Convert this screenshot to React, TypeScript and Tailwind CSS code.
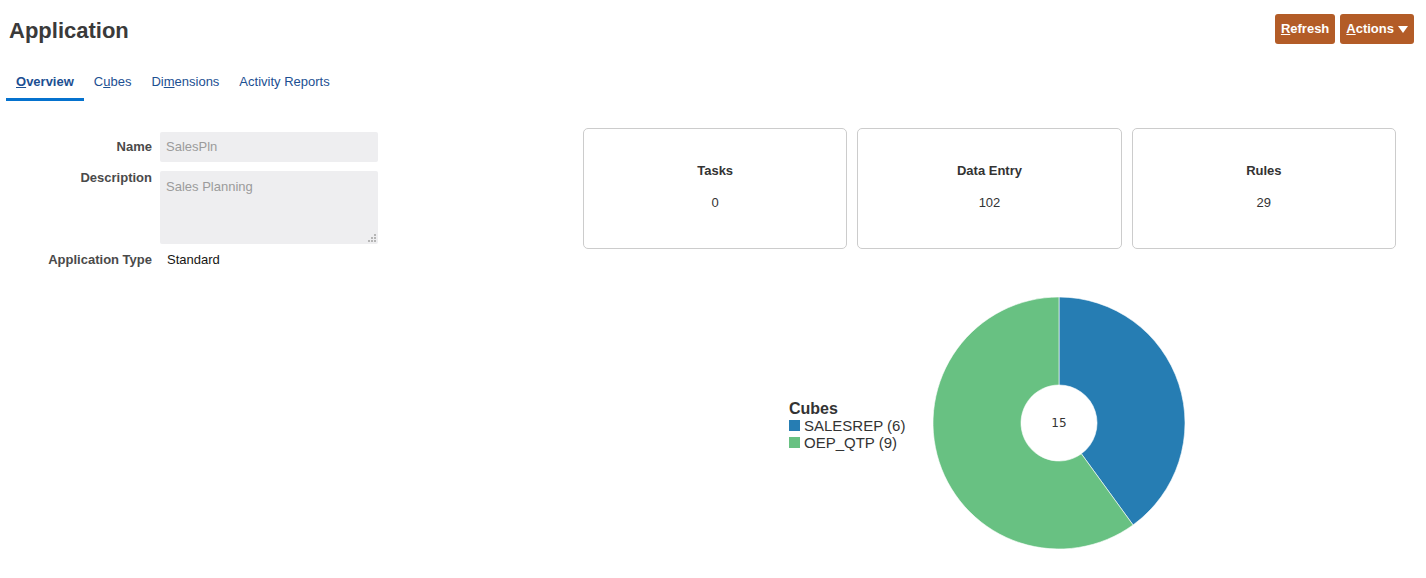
import React from "react";

const font = { fontFamily: '"Liberation Sans", Arial, sans-serif' };

const stats = [
  { label: "Tasks", value: "0" },
  { label: "Data Entry", value: "102" },
  { label: "Rules", value: "29" },
];

const Donut: React.FC = () => (
  <svg width="252" height="252" viewBox="0 0 252 252">
    <path
      d="M126 0 A126 126 0 0 1 200.06 227.94 L148.34 156.74 A38 38 0 0 0 126 88 Z"
      fill="#267db3"
      stroke="#ffffff"
      strokeWidth="0.6"
    />
    <path
      d="M200.06 227.94 A126 126 0 1 1 126 0 L126 88 A38 38 0 1 0 148.34 156.74 Z"
      fill="#68c182"
      stroke="#ffffff"
      strokeWidth="0.6"
    />
    <text
      x="126"
      y="130"
      textAnchor="middle"
      fontSize="12"
      fill="#333333"
      fontFamily='"DejaVu Sans", sans-serif'
    >
      15
    </text>
  </svg>
);

export default function App() {
  return (
    <div className="min-h-screen bg-white text-[#333]" style={font}>
      {/* header */}
      <div className="flex items-start justify-between pl-2 pr-3 pt-[14px]">
        <h1 className="text-[22px] font-bold text-[#3a3a3a] leading-[24px] pl-px pt-[5px]">
          Application
        </h1>
        <div className="flex gap-[5px]">
          <button className="h-[30px] px-[6px] rounded-[3px] bg-[#b35c27] text-white text-[13px] font-bold">
            <span className="underline">R</span>efresh
          </button>
          <button className="h-[30px] px-[6px] rounded-[3px] bg-[#b35c27] text-white text-[13px] font-bold flex items-center gap-[4px]">
            <span>
              <span className="underline">A</span>ctions
            </span>
            <svg width="10" height="7" viewBox="0 0 10 7">
              <path d="M0 0 L10 0 L5 7 Z" fill="#ffffff" />
            </svg>
          </button>
        </div>
      </div>

      {/* tabs */}
      <div className="flex mt-[20px] pl-[6px] text-[13px] text-[#1c4f92]">
        <div className="h-[37px] px-[10px] flex items-center border-b-[3px] border-[#0572ce] font-bold pt-[1px]">
          <span>
            <span className="underline">O</span>verview
          </span>
        </div>
        <div className="h-[37px] px-[10px] flex items-center border-b-[3px] border-transparent pt-[1px]">
          <span>
            C<span className="underline">u</span>bes
          </span>
        </div>
        <div className="h-[37px] px-[10px] flex items-center border-b-[3px] border-transparent pt-[1px]">
          <span>
            Di<span className="underline">m</span>ensions
          </span>
        </div>
        <div className="h-[37px] px-[10px] flex items-center border-b-[3px] border-transparent pt-[1px]">
          <span>Activity Reports</span>
        </div>
      </div>

      {/* content */}
      <div className="flex mt-[27px]">
        <div className="w-[583px] pt-[4px] text-[13px]">
          <div className="flex items-center">
            <div className="w-[152px] text-right font-bold text-[#4a4a4a]">Name</div>
            <div className="ml-[8px] w-[218px] h-[30px] rounded-[2px] bg-[#eeeef0] px-[6px] flex items-center text-[#9b9b9b]">
              SalesPln
            </div>
          </div>
          <div className="flex items-start mt-[9px]">
            <div className="w-[152px] text-right font-bold text-[#4a4a4a] leading-[14px]">
              Description
            </div>
            <div className="relative ml-[8px] w-[218px] h-[73px] rounded-[2px] bg-[#eeeef0] px-[6px] pt-[6px] text-[#9b9b9b]">
              Sales Planning
              <svg
                className="absolute right-[2px] bottom-[2px]"
                width="8"
                height="8"
                viewBox="0 0 8 8"
              >
                <rect x="6" y="0" width="2" height="2" fill="#b5b5b5" />
                <rect x="3" y="3" width="2" height="2" fill="#b5b5b5" />
                <rect x="6" y="3" width="2" height="2" fill="#b5b5b5" />
                <rect x="0" y="6" width="2" height="2" fill="#b5b5b5" />
                <rect x="3" y="6" width="2" height="2" fill="#b5b5b5" />
                <rect x="6" y="6" width="2" height="2" fill="#b5b5b5" />
              </svg>
            </div>
          </div>
          <div className="flex items-center mt-[8px] leading-[16px]">
            <div className="w-[152px] text-right font-bold text-[#4a4a4a]">
              Application Type
            </div>
            <div className="ml-[15px] text-[#161513]">Standard</div>
          </div>
        </div>

        <div className="w-[813px]">
          <div className="grid grid-cols-3 gap-[10px]">
            {stats.map((s) => (
              <div
                key={s.label}
                className="h-[121px] rounded-[5px] border border-[#cccccc] flex flex-col items-center pt-[34px] gap-[16px] text-[13px] leading-[16px] text-[#333]"
              >
                <div className="font-bold">{s.label}</div>
                <div>{s.value}</div>
              </div>
            ))}
          </div>

          <div className="flex items-center justify-center gap-[26px] mt-[48px] pr-[5px]">
            <div className="flex flex-col w-[118px] mt-[4px]">
              <div className="text-[16px] font-bold leading-[17px] text-[#333]">Cubes</div>
              <div className="flex items-center gap-[4px] text-[15px] leading-[17px] text-[#333] whitespace-nowrap">
                <span className="w-[11px] h-[11px] bg-[#267db3] shrink-0" />
                SALESREP (6)
              </div>
              <div className="flex items-center gap-[4px] text-[15px] leading-[17px] text-[#333] whitespace-nowrap">
                <span className="w-[11px] h-[11px] bg-[#68c182] shrink-0" />
                OEP_QTP (9)
              </div>
            </div>
            <Donut />
          </div>
        </div>
      </div>
    </div>
  );
}
